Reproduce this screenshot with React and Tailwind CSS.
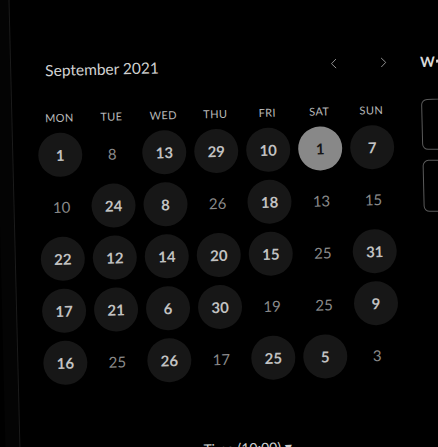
import React from "react";
import { ChevronLeft, ChevronRight } from "lucide-react";

const days = ["MON", "TUE", "WED", "THU", "FRI", "SAT", "SUN"];

// c = filled circle, s = selected, "" = plain
const weeks = [
  [["1", "c"], ["8", ""], ["13", "c"], ["29", "c"], ["10", "c"], ["1", "s"], ["7", "c"]],
  [["10", ""], ["24", "c"], ["8", "c"], ["26", ""], ["18", "c"], ["13", ""], ["15", ""]],
  [["22", "c"], ["12", "c"], ["14", "c"], ["20", "c"], ["15", "c"], ["25", ""], ["31", "c"]],
  [["17", "c"], ["21", "c"], ["6", "c"], ["30", "c"], ["19", ""], ["25", ""], ["9", "c"]],
  [["16", "c"], ["25", ""], ["26", "c"], ["17", ""], ["25", "c"], ["5", "c"], ["3", ""]],
];

const DayCell = ({ value, kind }) => {
  if (kind === "s") {
    return (
      <div className="w-[44px] h-[44px] rounded-full bg-[#888888] flex items-center justify-center text-[15px] font-bold text-[#151515]">
        {value}
      </div>
    );
  }
  if (kind === "c") {
    return (
      <div className="w-[44px] h-[44px] rounded-full bg-[#171717] flex items-center justify-center text-[15px] font-bold text-[#c2c2c2]">
        {value}
      </div>
    );
  }
  return (
    <div className="w-[44px] h-[44px] flex items-center justify-center text-[15px] text-[#8a8a8a]">
      {value}
    </div>
  );
};

export default function App() {
  return (
    <div className="w-[438px] h-[447px] overflow-hidden bg-black font-['Lato','Open_Sans',sans-serif]">
      <div className="w-[438px] h-[467px] -mt-[10px] pt-[10px] flex rotate-[-1.4deg] origin-center">
        <div className="w-[15px] shrink-0 -mt-[10px] border-r border-[#1b1b1b] bg-[#040404]" />

        <div className="w-[409px] shrink-0 pl-[21px] pt-[56px]">
          <div className="w-[364px] h-[20px] flex items-center pl-[13px]">
            <span className="text-[15.5px] leading-[20px] text-[#d2d2d2]">September 2021</span>
            <div className="ml-auto -mr-[2px] flex items-center gap-[20px] text-[#a0a0a0]">
              <span className="w-[30px] h-[20px] flex items-center justify-center">
                <ChevronLeft size={17} strokeWidth={1.25} />
              </span>
              <span className="w-[30px] h-[20px] flex items-center justify-center">
                <ChevronRight size={17} strokeWidth={1.25} />
              </span>
            </div>
          </div>

          <div className="mt-[31px] grid grid-cols-7 w-[364px]">
            {days.map((d) => (
              <div key={d} className="h-[14px] text-center text-[11px] leading-[14px] tracking-[0.4px] text-[#b8b8b8]">
                {d}
              </div>
            ))}
          </div>

          <div className="mt-[4px] grid grid-cols-7 w-[364px]">
            {weeks.map((week, wi) =>
              week.map(([value, kind], di) => (
                <div key={`${wi}-${di}`} className="h-[52px] flex items-center justify-center">
                  <DayCell value={value} kind={kind} />
                </div>
              ))
            )}
          </div>

          <div className="mt-[55px] pl-[162px] text-[14px] leading-[18px] text-[#d0d0d0]">
            Time (10:00) ▾
          </div>
        </div>

        <div className="w-[140px] shrink-0 pt-[56px]">
          <div className="h-[20px] flex items-center text-[14px] font-bold text-[#d8d8d8]">
            W<span className="ml-[1px] inline-block w-[10px] h-[3px] bg-[#d8d8d8]" />
          </div>
          <div className="mt-[28px] flex flex-col gap-[10px]">
            <div className="h-[51px] w-[120px] rounded-[6px] border border-[#5a5a5a]" />
            <div className="h-[52px] w-[120px] rounded-[6px] border border-[#5a5a5a]" />
          </div>
        </div>
      </div>
    </div>
  );
}
